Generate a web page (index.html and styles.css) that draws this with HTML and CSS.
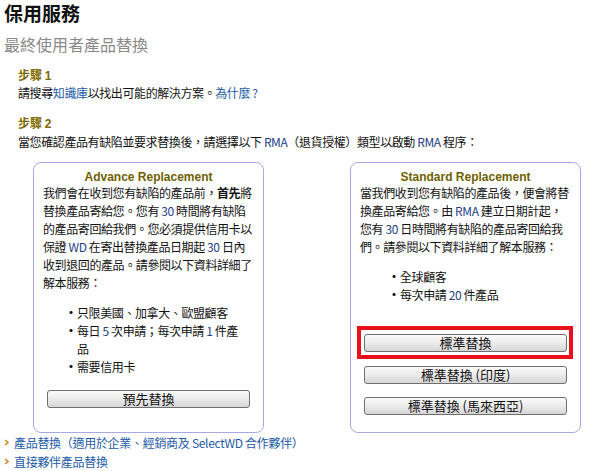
FILE: index.html
```html
<!DOCTYPE html>
<html lang="zh-Hant">
<head>
<meta charset="utf-8">
<title>保用服務</title>
<link rel="stylesheet" href="styles.css">
</head>
<body>
<div class="page">
  <h1 class="title">保用服務</h1>
  <h2 class="subtitle">最終使用者產品替換</h2>

  <div class="step">
    <h3 class="step-head">步驟 <span class="num">1</span></h3>
    <p class="step-text">請搜尋<a class="link" href="#">知識庫</a>以找出可能的解決方案。<a class="link" href="#">為什麼 ?</a></p>
  </div>

  <div class="step step-2">
    <h3 class="step-head">步驟 <span class="num">2</span></h3>
    <p class="step-text">當您確認產品有缺陷並要求替換後，請選擇以下 <span class="lat">RMA</span>（退貨授權）類型以啟動 <span class="lat">RMA</span> 程序：</p>
  </div>

  <div class="boxes">
    <div class="box">
      <div class="box-title">Advance Replacement</div>
      <p class="box-text">我們會在收到您有缺陷的產品前，<b>首先</b>將<br>替換產品寄給您。您有 <span class="lat">30</span> 時間將有缺陷<br>的產品寄回給我們。您必須提供信用卡以<br>保證 <span class="lat">WD</span> 在寄出替換產品日期起 <span class="lat">30</span> 日內<br>收到退回的產品。請參閱以下資料詳細了<br>解本服務：</p>
      <ul class="list list-left">
        <li><span class="dot">·</span><span>只限美國、加拿大、歐盟顧客</span></li>
        <li><span class="dot">·</span><span>每日 <span class="lat">5</span> 次申請；每次申請 <span class="lat">1</span> 件產<br>品</span></li>
        <li><span class="dot">·</span><span>需要信用卡</span></li>
      </ul>
      <button class="btn btn-first" type="button">預先替換</button>
    </div>

    <div class="box box-right">
      <div class="box-title">Standard Replacement</div>
      <p class="box-text">當我們收到您有缺陷的產品後，便會將替<br>換產品寄給您。由 <span class="lat">RMA</span> 建立日期計起，<br>您有 <span class="lat">30</span> 日時間將有缺陷的產品寄回給我<br>們。請參閱以下資料詳細了解本服務：</p>
      <ul class="list list-right">
        <li><span class="dot">·</span><span>全球顧客</span></li>
        <li><span class="dot">·</span><span>每次申請 <span class="lat">20</span> 件產品</span></li>
      </ul>
      <div class="highlight">
        <button class="btn" type="button">標準替換</button>
      </div>
      <button class="btn btn-2" type="button">標準替換 (印度)</button>
      <button class="btn btn-3" type="button">標準替換 (馬來西亞)</button>
    </div>
  </div>

  <ul class="links">
    <li><svg class="arrow" width="5" height="7" viewBox="0 0 5 7"><polyline points="1,1 4,3.5 1,6" fill="none" stroke="#c98a1e" stroke-width="1.5"/></svg><a class="link" href="#">產品替換（適用於企業、經銷商及 SelectWD 合作夥伴）</a></li>
    <li><svg class="arrow" width="5" height="7" viewBox="0 0 5 7"><polyline points="1,1 4,3.5 1,6" fill="none" stroke="#c98a1e" stroke-width="1.5"/></svg><a class="link" href="#">直接夥伴產品替換</a></li>
  </ul>
</div>
</body>
</html>
```

FILE: styles.css
```css
html, body {
  margin: 0;
  padding: 0;
  background: #ffffff;
}

body {
  font-family: "Noto Sans CJK TC", "Noto Sans", sans-serif;
  font-size: 12px;
  color: #111111;
}

.page {
  padding-left: 4px;
}

.title {
  margin: 0;
  font-size: 19px;
  line-height: 26px;
  font-weight: bold;
  color: #111111;
}

.subtitle {
  margin: 7px 0 0 0;
  font-size: 16px;
  line-height: 22px;
  font-weight: normal;
  color: #8a8a8a;
}

.step {
  padding-left: 14px;
  margin-top: 12px;
}

.step-2 {
  margin-top: 14px;
}

.step-head {
  margin: 0;
  font-size: 12px;
  line-height: 16px;
  font-weight: bold;
  color: #7d6a00;
}

.step-head .num {
  font-family: "Liberation Sans", sans-serif;
}

.step-text {
  margin: 1px 0 0 0;
  line-height: 16px;
  letter-spacing: -0.4px;
}

.step-2 .step-text {
  margin-top: 2px;
}

.link {
  color: #1d5aa6;
  text-decoration: none;
}

.lat {
  color: #22408a;
}

.boxes {
  display: flex;
  align-items: flex-start;
  gap: 86px;
  margin-top: 12px;
  padding-left: 29px;
}

.box {
  border: 1px solid #a8a8e2;
  border-radius: 8px;
  padding: 7px 9px 24px 9px;
  box-sizing: content-box;
  width: 211px;
  background: #ffffff;
}

.box-right {
  padding-bottom: 17px;
}

.box-title {
  text-align: center;
  font-family: "Liberation Sans", sans-serif;
  font-weight: bold;
  font-size: 12px;
  line-height: 14px;
  color: #6e5f00;
}

.box-text {
  margin: 0;
  line-height: 18px;
  letter-spacing: -0.4px;
  white-space: nowrap;
}

.box-text b {
  font-weight: bold;
}

.list {
  list-style: none;
  margin: 12px 0 0 0;
  padding: 0;
  line-height: 18px;
  letter-spacing: -0.4px;
}

.list-left {
  padding-left: 22px;
}

.list-right {
  padding-left: 28px;
}

.list li {
  display: flex;
}

.dot {
  width: 12px;
  flex: none;
  font-weight: bold;
}

.btn {
  display: block;
  width: calc(100% - 8px);
  margin: 0 4px;
  height: 18px;
  padding: 0;
  border: 1px solid #6f6f6f;
  border-radius: 3px;
  background: linear-gradient(#fbfbfb 0%, #ededed 45%, #d6d6d6 100%);
  font-family: "Noto Sans CJK TC", sans-serif;
  font-size: 13px;
  line-height: 16px;
  color: #111111;
  box-sizing: border-box;
}

.btn-first {
  margin-top: 14px;
}

.highlight {
  margin: 22px -2px 0 -3px;
  border: 4px solid #e8101a;
  padding: 4px 2px 3px 3px;
}

.highlight .btn {
  margin: 0;
  width: 100%;
}

.btn-2 {
  margin-top: 7px;
}

.btn-3 {
  margin-top: 13px;
}

.links {
  list-style: none;
  margin: 0;
  padding: 0;
  line-height: 18px;
  letter-spacing: -0.3px;
}

.links li {
  display: flex;
  align-items: center;
  gap: 5px;
  height: 19px;
}

.arrow {
  flex: none;
}
```
